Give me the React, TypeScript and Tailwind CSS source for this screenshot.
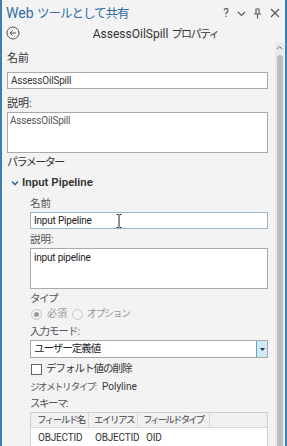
import React from "react";

function Label({ children, className = "" }: { children: React.ReactNode; className?: string }) {
  return <div className={`h-[16px] flex items-center leading-none whitespace-nowrap ${className}`}>{children}</div>;
}

const root =
  'w-[287px] h-[446px] flex flex-col bg-[#f3f3f3] border-l-2 border-r-2 border-[#3b7fb0] overflow-hidden text-[#333] font-["Roboto","Noto_Sans_CJK_JP",sans-serif]';

export default function App() {
  return (
    <div className={root}>
      {/* title bar */}
      <div className="h-[24px] flex items-center justify-between pl-[4px] pr-[5px] pt-[2px]">
        <span className="text-[#2f6fa6] leading-none whitespace-nowrap">
          <span className="text-[14px]">Web </span>
          <span className="text-[12.5px] tracking-[-1px]">ツールとして共有</span>
        </span>
        <div className="flex items-center gap-[6px] text-[#555]">
          <span className="text-[12px] leading-none w-[8px] text-center">?</span>
          <svg width="9" height="9" viewBox="0 0 9 9" className="mx-[1px]">
            <path d="M1 3 L4.5 6.5 L8 3" fill="none" stroke="#555" strokeWidth="1.1" />
          </svg>
          <svg width="9" height="11" viewBox="0 0 9 11">
            <path d="M2.5 1 H6.5 M3 1 V6 M6 1 V6 M1 6 H8 M4.5 6 V10.5" fill="none" stroke="#555" strokeWidth="1.1" />
          </svg>
          <svg width="10" height="10" viewBox="0 0 10 10" className="ml-[2px]">
            <path d="M1 1 L9 9 M9 1 L1 9" fill="none" stroke="#555" strokeWidth="1.1" />
          </svg>
        </div>
      </div>

      {/* sub header */}
      <div className="h-[18px] flex items-center pl-[4px] pr-[8px]">
        <svg width="14" height="14" viewBox="0 0 14 14">
          <circle cx="7" cy="7" r="6" fill="none" stroke="#555" strokeWidth="1" />
          <path d="M10 7 H4 M6.5 4.5 L4 7 L6.5 9.5" fill="none" stroke="#555" strokeWidth="1" />
        </svg>
        <span className="flex-1 text-center leading-none text-[#333] pl-[14px] whitespace-nowrap">
          <span className="text-[12px]">AssessOilSpill </span>
          <span className="text-[11px] tracking-[-1.5px]">プロパティ</span>
        </span>
      </div>

      {/* body */}
      <div className="flex-1 flex min-h-0">
        <div className="flex-1 pl-[5px] pr-[7px] pt-[8px] text-[11px]">
          <Label>名前</Label>
          <div className="mt-[6px] h-[17px] bg-white border border-[#a9a9a9] flex items-center px-[3px] text-[10px] tracking-[-0.2px] leading-none">
            AssessOilSpill
          </div>
          <Label className="mt-[6px]">説明:</Label>
          <div className="mt-[1px] h-[41px] bg-white border border-[#a9a9a9] px-[2px] pt-[1px] text-[10px] tracking-[-0.2px] leading-[14px] text-[#555]">
            AssessOilSpill
          </div>
          <Label className="mt-[1px] tracking-[-1.5px]">パラメーター</Label>

          <div className="mt-[5px] h-[16px] flex items-center pl-[4px]">
            <svg width="8" height="6" viewBox="0 0 8 6">
              <path d="M1 1.5 L4 4.5 L7 1.5" fill="none" stroke="#2f6fa6" strokeWidth="1.6" />
            </svg>
            <span className="ml-[3px] text-[11.5px] font-semibold leading-none text-[#333]">Input Pipeline</span>
          </div>

          <div className="pl-[23px] text-[10.5px] text-[#555]">
            <Label className="mt-[5px]">名前</Label>
            <div className="relative h-[17px] bg-white border border-[#9fb7c8] flex items-center px-[3px] text-[10px] tracking-[-0.2px] leading-none text-[#222]">
              Input Pipeline
              <svg width="6" height="14" viewBox="0 0 6 14" className="absolute left-[85px] top-[1px]">
                <path d="M0.5 0.5 H2.5 M3.5 0.5 H5.5 M3 1 V13 M0.5 13.5 H2.5 M3.5 13.5 H5.5" fill="none" stroke="#222" strokeWidth="1" />
              </svg>
            </div>
            <Label className="mt-[3px]">説明:</Label>
            <div className="h-[41px] bg-white border border-[#a9a9a9] px-[3px] pt-[2px] text-[10px] tracking-[-0.2px] leading-[14px] text-[#222]">
              input pipeline
            </div>
            <Label className="mt-[2px] tracking-[-1.5px]">タイプ</Label>
            <div className="h-[14px] flex items-center text-[#999] whitespace-nowrap text-[10px]">
              <span className="w-[11px] h-[11px] rounded-full border border-[#c4c4c4] bg-[#f3f3f3] flex items-center justify-center ml-[1px]">
                <span className="w-[5px] h-[5px] rounded-full bg-[#999]" />
              </span>
              <span className="ml-[5px] leading-none">必須</span>
              <span className="ml-[5px] w-[11px] h-[11px] rounded-full border border-[#c4c4c4] bg-[#f3f3f3]" />
              <span className="ml-[4px] leading-none tracking-[-1.5px]">オプション</span>
            </div>
            <Label className="mt-[3px] tracking-[-1px]">入力モード:</Label>
            <div className="h-[18px] bg-white border border-[#a9a9a9] flex items-center text-[10.5px] leading-none text-[#222]">
              <span className="flex-1 pl-[3px] tracking-[-1px] whitespace-nowrap">ユーザー定義値</span>
              <span className="w-[11px] h-full bg-[#cfe8f6] border-l border-[#5ea6d2] flex items-center justify-center">
                <svg width="5" height="3" viewBox="0 0 5 3">
                  <path d="M0 0 H5 L2.5 3 Z" fill="#333" />
                </svg>
              </span>
            </div>
            <div className="mt-[4px] h-[14px] flex items-center text-[#333] whitespace-nowrap">
              <span className="w-[11px] h-[11px] border border-[#666] bg-white ml-[1px]" />
              <span className="ml-[4px] leading-none tracking-[-1px]">デフォルト値の削除</span>
            </div>
            <Label className="mt-[3px]">
              <span className="w-[72px] text-[9.5px] tracking-[-1.5px]">ジオメトリ タイプ:</span>
              <span className="text-[#333] text-[10px]">Polyline</span>
            </Label>
            <Label className="mt-[1px] tracking-[-1.5px]">スキーマ:</Label>
            <div className="border border-[#cfcfcf] bg-white text-[9.5px] text-[#444] whitespace-nowrap">
              <div className="h-[15px] flex bg-[#f0f0f0] border-b border-[#d9d9d9] leading-none">
                <span className="w-[58px] shrink-0 overflow-hidden flex items-center pl-[6px] border-r border-[#d9d9d9] tracking-[-1.5px]">フィールド名</span>
                <span className="w-[49px] shrink-0 overflow-hidden flex items-center pl-[5px] border-r border-[#d9d9d9] tracking-[-1.5px]">エイリアス</span>
                <span className="w-[72px] shrink-0 overflow-hidden flex items-center pl-[5px] border-r border-[#d9d9d9] tracking-[-2px]">フィールド タイプ</span>
                <span className="flex-1" />
              </div>
              <div className="h-[20px] flex items-center leading-none text-[#333] text-[10px] tracking-[-0.2px]">
                <span className="w-[58px] shrink-0 pl-[7px]">OBJECTID</span>
                <span className="w-[49px] shrink-0 pl-[6px]">OBJECTID</span>
                <span className="pl-[8px]">OID</span>
              </div>
            </div>
          </div>
        </div>

        {/* scrollbar */}
        <div className="w-[9px] mr-[1px] bg-[#e9e9e9] flex flex-col items-center">
          <svg width="7" height="5" viewBox="0 0 7 5" className="mt-[3px]">
            <path d="M1 4 L3.5 1.5 L6 4" fill="none" stroke="#666" strokeWidth="1" />
          </svg>
          <div className="mt-[5px] w-[6px] flex-1 bg-[#bdbdbd] rounded-t-[3px]" />
        </div>
      </div>
    </div>
  );
}
